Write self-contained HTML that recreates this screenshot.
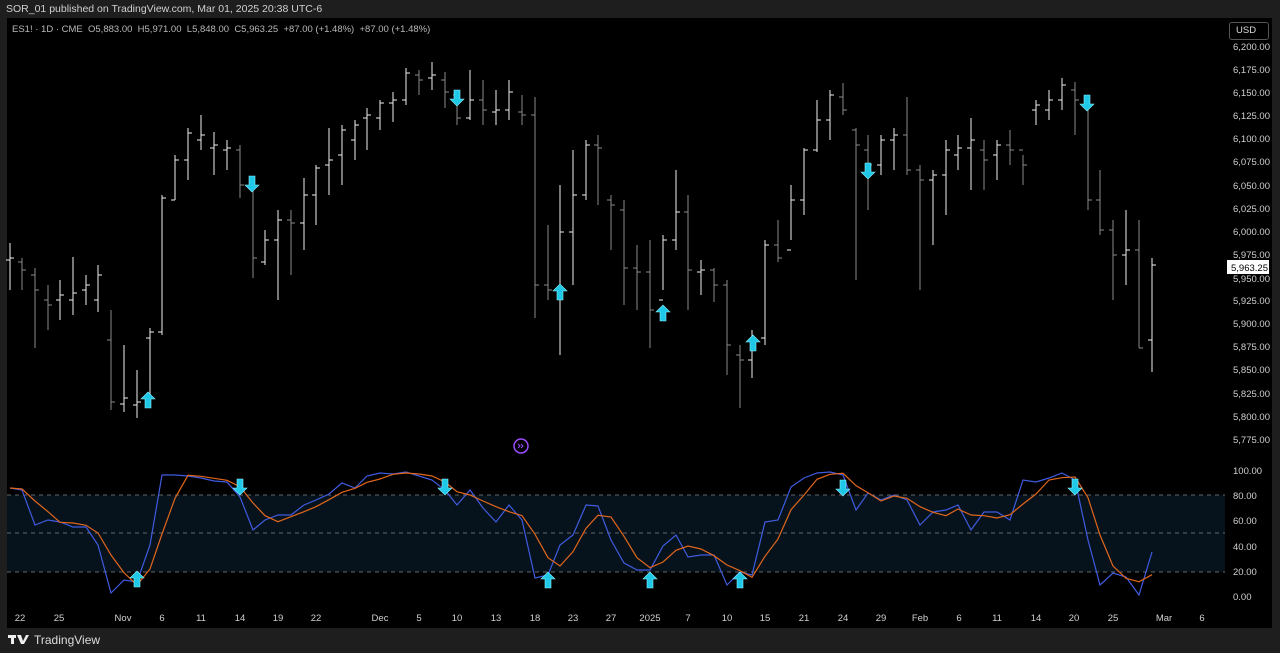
<!DOCTYPE html>
<html><head><meta charset="utf-8"><style>
body{margin:0;width:1280px;height:653px;background:#1e1e1e;overflow:hidden;font-family:"Liberation Sans",sans-serif;position:relative}
#hdr{position:absolute;left:6px;top:3px;font-size:10.5px;color:#d0d0d0}
#panel{position:absolute;left:7px;top:18px;width:1265px;height:610px;background:#000}
#leg{position:absolute;left:12px;top:24px;font-size:9.5px;color:#b8b8b8;white-space:pre}
#usd{position:absolute;left:1229px;top:22px;width:40px;height:18px;border:1px solid #555;border-radius:3px;color:#ddd;font-size:9.5px;line-height:16px;box-sizing:border-box;padding-left:6px}
#foot{position:absolute;left:34px;top:633px;font-size:12px;color:#ddd}
svg{position:absolute;left:0;top:0}
</style></head><body>
<div id="panel"></div>
<div id="hdr">SOR_01 published on TradingView.com, Mar 01, 2025 20:38 UTC-6</div>
<div id="leg">ES1! · 1D · CME  O5,883.00  H5,971.00  L5,848.00  C5,963.25  +87.00 (+1.48%)  +87.00 (+1.48%)</div>
<div id="usd">USD</div>
<svg id="s" width="1280" height="653" font-family="Liberation Sans, sans-serif" font-size="9.5" fill="#d0d0d0">
<rect x="7" y="495" width="1218" height="77" fill="#07131c"/>
<g stroke="#666" stroke-dasharray="4,4" stroke-width="1">
<line x1="7" y1="495" x2="1225" y2="495"/><line x1="7" y1="533" x2="1225" y2="533"/><line x1="7" y1="572" x2="1225" y2="572"/></g>
<g id="bars"></g>
<g id="osc"></g>
<g id="arr"></g>
<circle cx="521" cy="446" r="7" fill="none" stroke="#9c4dff" stroke-width="1.5"/>
<path d="M518 444l2 2-2 2M521 444l2 2-2 2" stroke="#9c4dff" fill="none" stroke-width="1"/>
<g text-anchor="start">
<text x="1233" y="50">6,200.00</text><text x="1233" y="73">6,175.00</text><text x="1233" y="96">6,150.00</text><text x="1233" y="119">6,125.00</text><text x="1233" y="142">6,100.00</text><text x="1233" y="165">6,075.00</text><text x="1233" y="189">6,050.00</text><text x="1233" y="212">6,025.00</text><text x="1233" y="235">6,000.00</text><text x="1233" y="258">5,975.00</text><text x="1233" y="304">5,925.00</text><text x="1233" y="327">5,900.00</text><text x="1233" y="350">5,875.00</text><text x="1233" y="373">5,850.00</text><text x="1233" y="397">5,825.00</text><text x="1233" y="420">5,800.00</text><text x="1233" y="443">5,775.00</text>
<text x="1233" y="282">5,950.00</text>
<rect x="1227" y="260" width="42" height="14" fill="#fff"/><text x="1231" y="271" fill="#000">5,963.25</text>
<text x="1233" y="474">100.00</text><text x="1233" y="499">80.00</text><text x="1233" y="524">60.00</text><text x="1233" y="550">40.00</text><text x="1233" y="575">20.00</text><text x="1233" y="600">0.00</text>
</g>
<g text-anchor="middle">
<text x="20" y="621">22</text><text x="59" y="621">25</text><text x="123" y="621">Nov</text><text x="162" y="621">6</text><text x="201" y="621">11</text><text x="240" y="621">14</text><text x="278" y="621">19</text><text x="316" y="621">22</text><text x="380" y="621">Dec</text><text x="419" y="621">5</text><text x="457" y="621">10</text><text x="496" y="621">13</text><text x="535" y="621">18</text><text x="573" y="621">23</text><text x="611" y="621">27</text><text x="650" y="621">2025</text><text x="688" y="621">7</text><text x="727" y="621">10</text><text x="765" y="621">15</text><text x="804" y="621">21</text><text x="843" y="621">24</text><text x="881" y="621">29</text><text x="920" y="621">Feb</text><text x="959" y="621">6</text><text x="997" y="621">11</text><text x="1036" y="621">14</text><text x="1074" y="621">20</text><text x="1113" y="621">25</text><text x="1164" y="621">Mar</text><text x="1202" y="621">6</text>
</g>
<g fill="#eee"><rect x="8" y="635" width="8" height="3"/><rect x="11" y="635" width="3" height="9"/><path d="M17 635h4l2 6 3-6h3l-5 9h-3z"/></g>
</svg>
<div id="foot">TradingView</div>
<script>
const B=[[10,243,290,260,258],[22,258,290,262,270],[35,268,348,275,290],[48,285,330,300,305],[60,280,320,300,295],[73,257,315,300,293],[86,275,305,290,285],[98,265,312,300,275],[111,310,410,340,402],[124,345,412,404,398],[137,370,418,405,402],[150,328,407,338,332],[162,195,335,332,198],[175,155,200,200,160],[188,128,180,160,133],[201,115,150,140,135],[214,132,175,148,145],[227,140,170,150,148],[240,145,198,150,185],[253,185,278,185,258],[265,230,265,262,240],[278,210,300,240,220],[291,210,275,220,223],[304,178,250,223,195],[316,165,225,195,168],[329,128,195,165,160],[342,125,185,155,130],[355,120,160,140,125],[367,108,150,118,115],[380,100,130,118,103],[393,92,122,103,100],[406,68,105,100,73],[419,70,95,75,80],[432,62,90,78,75],[445,72,108,80,92],[457,90,125,95,118],[470,70,120,118,100],[483,80,125,100,110],[496,90,125,112,110],[509,80,120,110,92],[522,95,125,112,115],[535,97,318,115,285],[548,225,300,285,290],[560,185,355,290,232],[573,150,285,232,195],[586,140,200,195,145],[598,135,205,145,148],[611,195,250,200,205],[624,200,305,210,268],[637,245,310,268,272],[650,240,348,272,310],[663,235,290,300,240],[676,170,250,240,212],[688,195,310,212,270],[701,260,295,272,270],[714,268,302,270,285],[727,280,375,285,345],[740,345,408,355,360],[752,330,378,360,345],[765,240,345,338,245],[778,220,262,245,258],[791,185,240,250,200],[804,148,215,200,150],[817,100,152,150,120],[830,90,140,120,95],[843,83,115,97,110],[856,128,280,130,145],[868,135,210,150,165],[881,135,175,165,140],[894,128,170,140,135],[907,97,175,135,170],[920,165,290,170,180],[933,170,245,180,175],[946,140,215,175,150],[958,135,170,155,148],[971,118,190,148,140],[984,140,190,150,160],[997,140,180,155,145],[1010,130,165,145,150],[1023,155,185,150,165],[1036,100,125,110,105],[1049,90,120,110,100],[1062,78,110,100,85],[1075,82,135,90,100],[1088,95,210,100,200],[1100,170,235,200,230],[1113,220,300,230,255],[1126,210,285,255,250],[1139,220,348,250,348],[1152,258,372,340,265]];
let h='';for(const[x,hi,lo,o,c]of B){const col=c<o?'#f0f0f0':'#8a8a8a';h+=`<path d="M${x} ${hi}V${lo}M${x-4} ${o}H${x}M${x} ${c}H${x+4}" stroke="${col}" stroke-width="1" fill="none"/>`;}
document.getElementById('bars').innerHTML=h;
const O=[488,490,525,520,522,527,527,545,593,580,582,545,475,475,476,478,481,482,497,530,520,515,515,505,500,494,483,488,476,473,474,472,476,480,490,505,490,508,522,505,520,578,575,545,535,505,506,540,563,570,570,546,535,557,555,555,585,572,575,522,520,487,478,473,472,475,510,493,500,495,500,525,512,510,505,530,512,512,520,480,482,478,473,480,540,585,573,577,595,552];
let p1='',p2='';O.forEach((v,i)=>{const x=B[i][0];p1+=(i?'L':'M')+x+' '+v;const a=O.slice(Math.max(0,i-2),i+1);const m=a.reduce((s,t)=>s+t,0)/a.length;p2+=(i?'L':'M')+x+' '+m.toFixed(1);});
document.getElementById('osc').innerHTML=`<path d="${p1}" stroke="#3f5be0" stroke-width="1.2" fill="none"/><path d="${p2}" stroke="#e0661c" stroke-width="1.2" fill="none"/>`;
function up(x,y){return `<path d="M${x} ${y-9}l-7 7h4v9h6v-9h4z" fill="#1ec8e6" stroke="#8ef0ff" stroke-width="0.6"/>`}
function dn(x,y){return `<path d="M${x} ${y+9}l-7 -7h4v-9h6v9h4z" fill="#1ec8e6" stroke="#8ef0ff" stroke-width="0.6"/>`}
let a='';[[148,401],[560,293],[663,314],[753,344],[137,580],[548,581],[650,581],[740,581]].forEach(p=>a+=up(...p));
[[252,183],[457,97],[868,170],[1087,102],[240,486],[445,486],[843,487],[1075,486]].forEach(p=>a+=dn(...p));
document.getElementById('arr').innerHTML=a;
</script>
</body></html>
